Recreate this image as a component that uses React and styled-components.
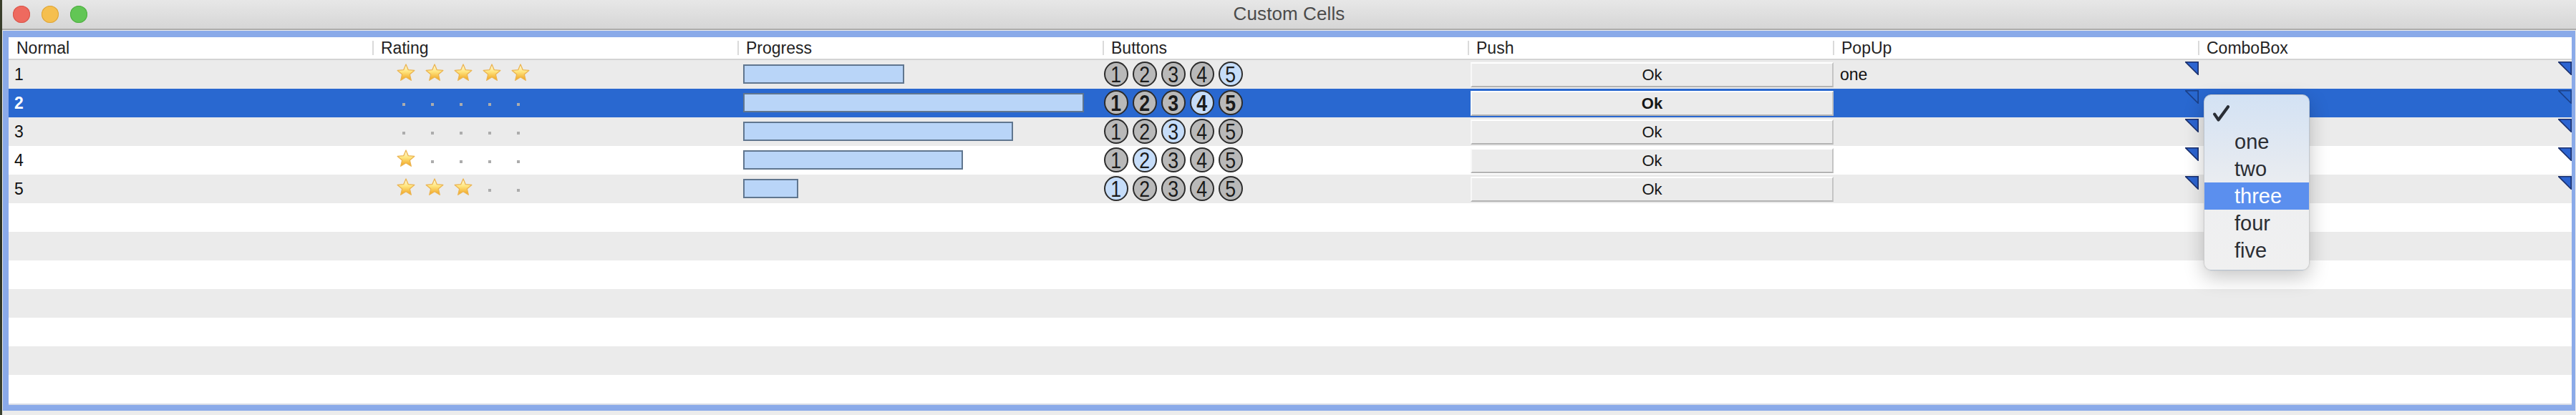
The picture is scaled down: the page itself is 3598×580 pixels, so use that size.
import React, { useId } from "react";
import styled, { createGlobalStyle, css } from "styled-components";

const GlobalStyle = createGlobalStyle`
  html, body { margin: 0; padding: 0; background: #ececec; }
  body { font-family: "Liberation Sans", Arial, sans-serif; }
  * { box-sizing: border-box; }
`;

const COLS = "509px repeat(5, 510px) 1fr";

const Screen = styled.div`
  display: flex;
  width: 3598px;
  height: 580px;
  overflow: hidden;
  background: #ececec;
`;

const DesktopEdge = styled.div`
  width: 3px;
  flex: none;
  background: linear-gradient(#3a3f2c, #2a3022 60%, #3b4230);
`;

const Window = styled.div`
  flex: 1;
  display: flex;
  flex-direction: column;
  min-width: 0;
`;

const TitleBar = styled.div`
  height: 42px;
  flex: none;
  display: grid;
  grid-template-columns: 1fr auto 1fr;
  align-items: center;
  background: linear-gradient(#e7e7e7, #d6d6d6);
  border-bottom: 2px solid #ababab;
`;

const Lights = styled.div`
  display: flex;
  gap: 16px;
  padding-left: 15px;
`;

const Light = styled.span`
  width: 24px;
  height: 24px;
  border-radius: 50%;
  background: ${(p) => p.$color};
  box-shadow: inset 0 0 0 1px ${(p) => p.$edge};
`;

const Title = styled.div`
  font-size: 26px;
  color: #4b4b4b;
  letter-spacing: 0.1px;
  padding-bottom: 1px;
`;

const Content = styled.div`
  flex: 1;
  display: flex;
  padding: 1px 1px 6px 1px;
  min-height: 0;
`;

const FocusRing = styled.div`
  flex: 1;
  display: flex;
  border-style: solid;
  border-color: #8aaae9;
  border-width: 9px 5px 8px 8px;
  min-width: 0;
`;

const TableView = styled.div`
  position: relative;
  flex: 1;
  display: flex;
  flex-direction: column;
  background: #fff;
  border-bottom: 2px solid #d6dbe6;
  min-width: 0;
`;

const HeaderRow = styled.div`
  display: grid;
  grid-template-columns: ${COLS};
  height: 32px;
  flex: none;
  background: #fff;
  border-bottom: 2px solid #d3d3d3;
`;

const HeaderCell = styled.div`
  position: relative;
  display: flex;
  align-items: center;
  padding-left: 11px;
  font-size: 23px;
  color: #232323;
  white-space: nowrap;
  ${(p) =>
    p.$sep &&
    css`
      &::before {
        content: "";
        position: absolute;
        left: -1px;
        top: 5px;
        bottom: 5px;
        width: 2px;
        background: #dadada;
      }
    `}
`;

const Row = styled.div`
  display: grid;
  grid-template-columns: ${COLS};
  height: 40px;
  flex: none;
  background: ${(p) => (p.$selected ? "#2968d0" : p.$odd ? "#ebebeb" : "#ffffff")};
  color: ${(p) => (p.$selected ? "#ffffff" : "#111111")};
  font-weight: ${(p) => (p.$selected ? 700 : 400)};
`;

const Cell = styled.div`
  position: relative;
  display: flex;
  align-items: center;
  min-width: 0;
  font-size: 23px;
`;

const NormalCell = styled(Cell)`
  padding-left: 8px;
`;

const RatingCell = styled(Cell)`
  padding-left: 23px;
`;

const StarSlot = styled.span`
  width: 40px;
  height: 40px;
  display: flex;
  align-items: center;
  flex: none;
`;

const StarSvg = styled.svg`
  margin-left: 10px;
  margin-top: -6px;
  width: 26px;
  height: 25px;
`;

const Dot = styled.span`
  margin-left: 18px;
  margin-top: 4px;
  width: 4px;
  height: 4px;
  background: #acacac;
`;

const ProgressCell = styled(Cell)`
  padding-left: 7px;
  padding-bottom: 7px;
  padding-top: 5px;
`;

const Bar = styled.div`
  height: 27px;
  background: #b9d5f8;
  border: 2px solid #60768f;
`;

const ButtonsCell = styled(Cell)`
  padding-left: 1px;
  gap: 6px;
  padding-top: 2px;
  padding-bottom: 3px;
`;

const NumButton = styled.span`
  width: 34px;
  height: 35px;
  flex: none;
  border-radius: 50%;
  border: 2.5px solid #2c2c2c;
  background: ${(p) => (p.$on ? "#c6ddf9" : "#b9b9b9")};
  color: #1b1b1b;
  display: flex;
  align-items: center;
  justify-content: center;
  font-size: 31px;
  line-height: 1;
  font-weight: ${(p) => (p.$bold ? 700 : 400)};
  padding-top: 1px;
`;

const Digit = styled.span`
  display: inline-block;
  transform: scaleX(0.86);
`;

const PushCell = styled(Cell)`
  padding: 3px 0 2px 3px;
  align-items: stretch;
`;

const PushButton = styled.div`
  flex: 1;
  display: flex;
  align-items: center;
  justify-content: center;
  background: #ebebeb;
  border-top: 2px solid #ffffff;
  border-left: 2px solid #f8f8f8;
  border-bottom: 2px solid #b3b3b3;
  border-right: 2px solid #c4c4c4;
  font-size: 22px;
  color: #161616;
  font-weight: ${(p) => (p.$bold ? 700 : 400)};
`;

const PopCell = styled(Cell)`
  padding-left: 9px;
  color: #111;
  font-weight: 400;
`;

const Corner = styled.svg`
  position: absolute;
  top: 2px;
  right: 0;
  width: 19px;
  height: 19px;
`;

const Menu = styled.div`
  position: absolute;
  left: 3066px;
  top: 80px;
  width: 148px;
  padding: 8px 0;
  border-radius: 10px;
  border: 1px solid rgba(0, 0, 0, 0.14);
  background: linear-gradient(#d3e2f4 0%, #e3e9f1 35%, #eeeff1 60%, #f0f0f0 100%);
  box-shadow: 0 10px 28px rgba(0, 0, 0, 0.22), 0 0 2px rgba(0, 0, 0, 0.1);
  z-index: 5;
`;

const MenuItem = styled.div`
  height: 38px;
  display: grid;
  grid-template-columns: 42px 1fr;
  align-items: center;
  font-size: 29px;
  color: ${(p) => (p.$hot ? "#ffffff" : "#2b2e33")};
  background: ${(p) => (p.$hot ? "#5b8fee" : "transparent")};
`;

const CheckSlot = styled.span`
  display: flex;
  align-items: center;
  padding-left: 12px;
  padding-bottom: 4px;
`;

function Star() {
  const id = useId();
  return (
    <StarSvg viewBox="0 0 26 25">
      <defs>
        <linearGradient id={id} x1="0" y1="0" x2="0" y2="1">
          <stop offset="0" stopColor="#fffbe6" />
          <stop offset="0.45" stopColor="#ffe680" />
          <stop offset="1" stopColor="#f0a11c" />
        </linearGradient>
      </defs>
      <polygon
        points="13,0.9 16.3,8.7 24.8,9.4 18.3,14.9 20.3,23.3 13,18.8 5.7,23.3 7.7,14.9 1.2,9.4 9.7,8.7"
        fill={`url(#${id})`}
        stroke="#ebb451"
        strokeWidth="1.3"
        strokeLinejoin="round"
      />
    </StarSvg>
  );
}

function CornerMark({ selected }) {
  return (
    <Corner viewBox="0 0 19 19">
      <polygon
        points="0.8,0.8 18.2,0.8 18.2,18.2"
        fill={selected ? "none" : "#2c64d1"}
        stroke={selected ? "#1b3f86" : "#1a2f6c"}
        strokeWidth="1.6"
        strokeLinejoin="miter"
      />
    </Corner>
  );
}

const rows = [
  { n: 1, rating: 5, progress: 225, pick: 5, popup: "one" },
  { n: 2, rating: 0, progress: 476, pick: 4, popup: "" },
  { n: 3, rating: 0, progress: 377, pick: 3, popup: "" },
  { n: 4, rating: 1, progress: 307, pick: 2, popup: "" },
  { n: 5, rating: 3, progress: 77, pick: 1, popup: "" },
];

const headers = ["Normal", "Rating", "Progress", "Buttons", "Push", "PopUp", "ComboBox"];
const menuItems = ["one", "two", "three", "four", "five"];

export default function App() {
  const emptyRows = Array.from({ length: 7 }, (_, i) => i + 6);
  return (
    <>
      <GlobalStyle />
      <Screen>
        <DesktopEdge />
        <Window>
          <TitleBar>
            <Lights>
              <Light $color="#ee6a5f" $edge="#d8554a" />
              <Light $color="#f5bf4f" $edge="#dca43a" />
              <Light $color="#62c655" $edge="#4fae43" />
            </Lights>
            <Title>Custom Cells</Title>
            <span />
          </TitleBar>
          <Content>
            <FocusRing>
              <TableView>
                <HeaderRow>
                  {headers.map((h, i) => (
                    <HeaderCell key={h} $sep={i > 0}>
                      {h}
                    </HeaderCell>
                  ))}
                </HeaderRow>
                {rows.map((r) => {
                  const selected = r.n === 2;
                  return (
                    <Row key={r.n} $odd={r.n % 2 === 1} $selected={selected}>
                      <NormalCell>{r.n}</NormalCell>
                      <RatingCell>
                        {[1, 2, 3, 4, 5].map((s) => (
                          <StarSlot key={s}>{s <= r.rating ? <Star /> : <Dot />}</StarSlot>
                        ))}
                      </RatingCell>
                      <ProgressCell>
                        <Bar style={{ width: `${r.progress}px` }} />
                      </ProgressCell>
                      <ButtonsCell>
                        {[1, 2, 3, 4, 5].map((b) => (
                          <NumButton key={b} $on={b === r.pick} $bold={selected}>
                            <Digit>{b}</Digit>
                          </NumButton>
                        ))}
                      </ButtonsCell>
                      <PushCell>
                        <PushButton $bold={selected}>Ok</PushButton>
                      </PushCell>
                      <PopCell>
                        {r.popup}
                        <CornerMark selected={selected} />
                      </PopCell>
                      <PopCell>
                        <CornerMark selected={selected} />
                      </PopCell>
                    </Row>
                  );
                })}
                {emptyRows.map((n) => (
                  <Row key={n} $odd={n % 2 === 1} />
                ))}
                <Menu>
                  <MenuItem>
                    <CheckSlot>
                      <svg width="23" height="23" viewBox="0 0 23 23">
                        <path
                          d="M2.2 12.6 L7.6 20.6 L21 2.2"
                          fill="none"
                          stroke="#2a2e35"
                          strokeWidth="4.2"
                          strokeLinecap="round"
                          strokeLinejoin="round"
                        />
                      </svg>
                    </CheckSlot>
                    <span />
                  </MenuItem>
                  {menuItems.map((m) => (
                    <MenuItem key={m} $hot={m === "three"}>
                      <span />
                      <span>{m}</span>
                    </MenuItem>
                  ))}
                </Menu>
              </TableView>
            </FocusRing>
          </Content>
        </Window>
      </Screen>
    </>
  );
}
